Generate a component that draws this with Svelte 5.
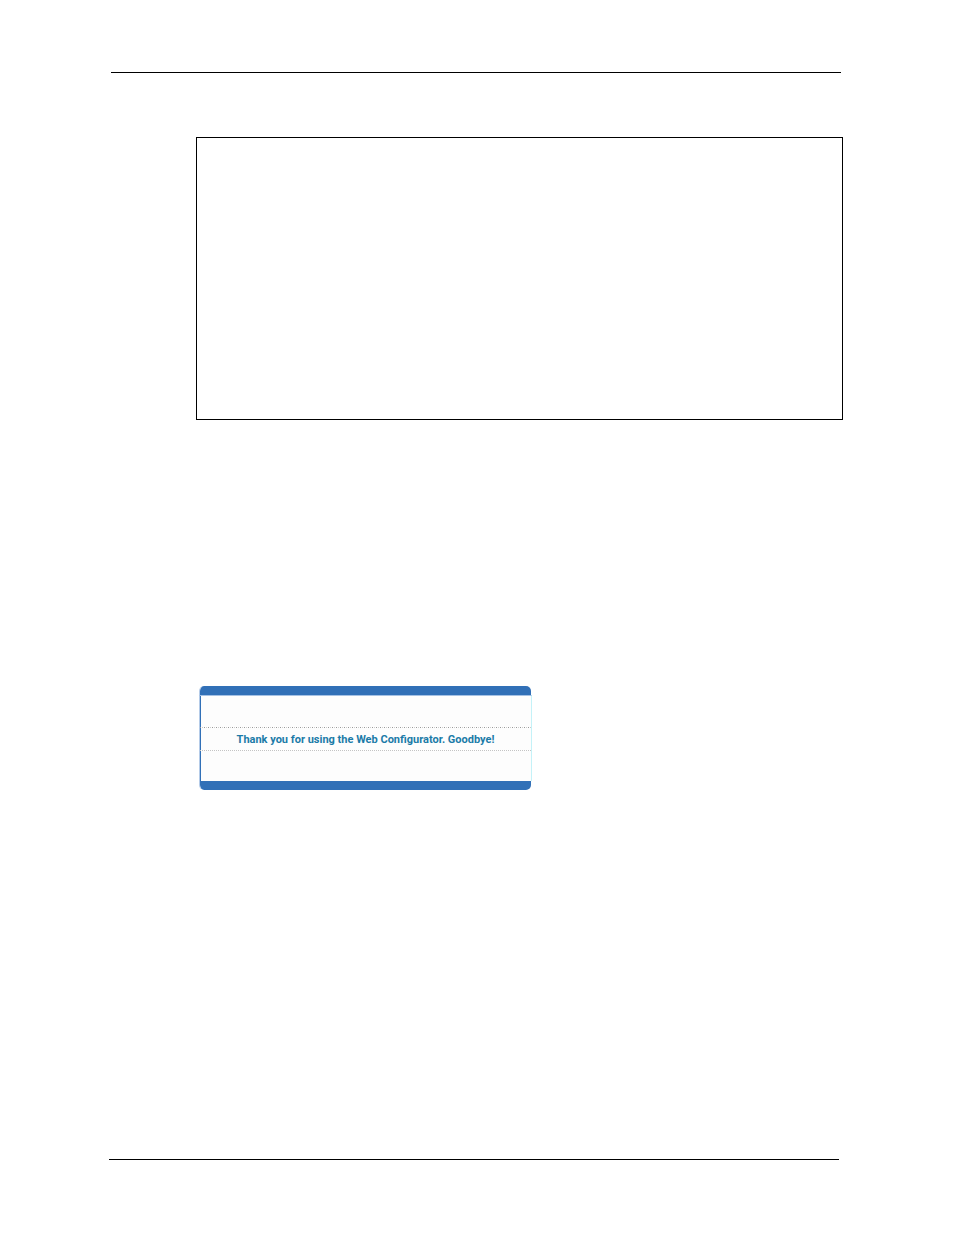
<script lang="ts">
  let { message = 'Thank you for using the Web Configurator. Goodbye!' }: { message?: string } = $props()
</script>

<div class="page">
  <header class="rule top"></header>

  <main>
    <section class="frame"></section>

    <section class="dialog">
      <div class="bar upper"></div>
      <div class="body">
        <p class="message">{message}</p>
      </div>
      <div class="bar lower"></div>
    </section>
  </main>

  <footer class="rule bottom"></footer>
</div>

<style>
  :global(body) {
    margin: 0;
    background: #fff;
  }

  .page {
    display: flex;
    flex-direction: column;
    box-sizing: border-box;
    min-height: 100vh;
    padding: 72px 111px 75px 109px;
    font-family: Roboto, 'Liberation Sans', sans-serif;
  }

  .rule {
    border-top: 1px solid #000;
  }
  .top {
    margin: 0 2px 64px;
  }
  .bottom {
    margin-right: 4px;
  }

  main {
    flex: 1;
    padding-left: 87px;
  }

  .frame {
    box-sizing: border-box;
    min-height: 283px;
    border: 1px solid #000;
  }

  .dialog {
    max-width: 333px;
    margin: 266px 0 0 3px;
  }

  .bar {
    height: 9px;
    margin-right: 1px;
    border-left: 1px solid #b4cbe8;
    background: #3170b7;
    background-clip: padding-box;
  }
  .upper {
    border-radius: 5px 5px 0 0;
  }
  .lower {
    border-radius: 0 0 5px 5px;
  }

  .body {
    padding: 31px 0 30px;
    border-top: 1px solid #a5c1e4;
    border-left: 1px solid #b4cbe8;
    border-right: 1px solid #c4f2f8;
    background: linear-gradient(#3170b7, #3170b7) left / 1px 100% no-repeat #fdfdfd;
  }

  .message {
    margin: 0;
    padding: 2px 0 0;
    /* dotted separators above and below the text */
    background:
      repeating-linear-gradient(90deg, #999 0 1px, #fff 1px 2px, #ccc 2px 3px, #fff 3px 4px) top / 100% 1px no-repeat,
      repeating-linear-gradient(90deg, #c4c4c4 0 1px, #fff 1px 2px) bottom / 100% 1px no-repeat;
    color: #1b7ba8;
    font-size: 11px;
    font-weight: 700;
    line-height: 22px;
    text-align: center;
  }
</style>
